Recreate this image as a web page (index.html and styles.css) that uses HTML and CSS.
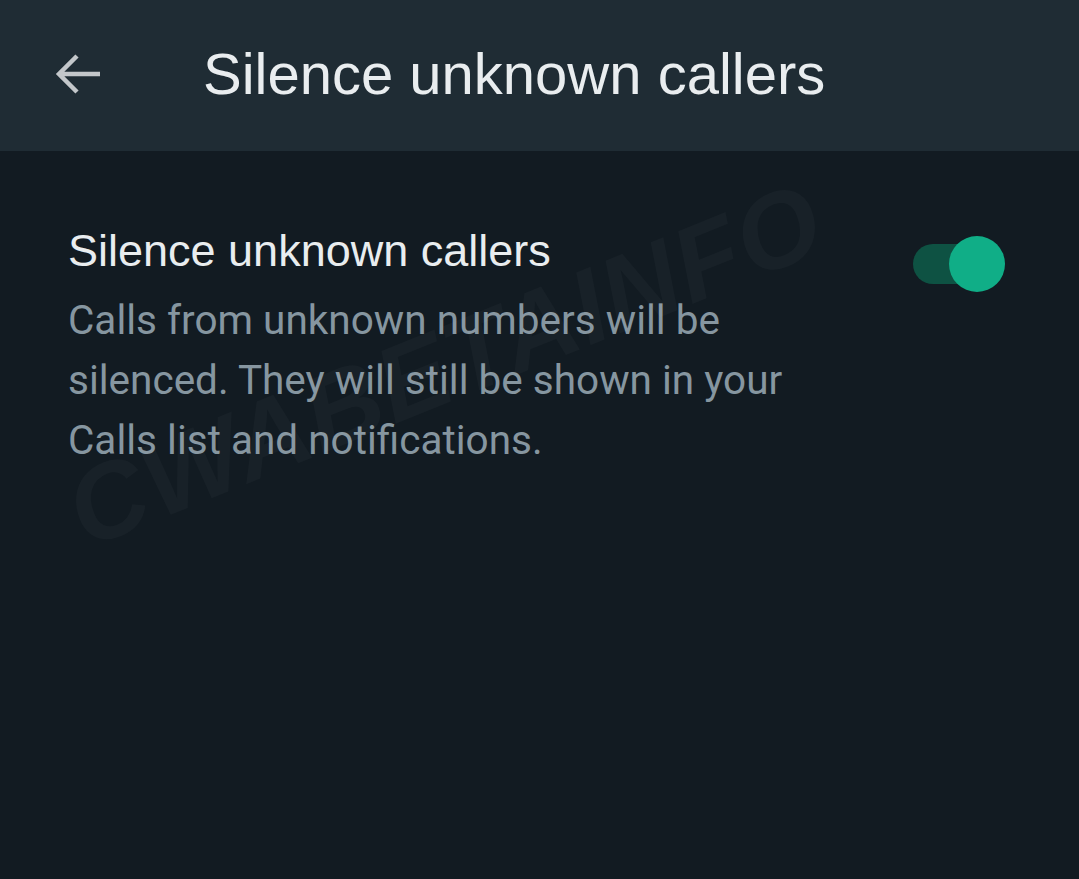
FILE: index.html
```html
<!DOCTYPE html>
<html lang="en">
<head>
    <meta charset="UTF-8">
    <meta name="viewport" content="width=device-width, initial-scale=1.0">
    <title>Silence unknown callers</title>
    <link rel="stylesheet" href="styles.css">
</head>
<body>
    <header class="app-bar">
        <button class="back-btn" aria-label="Back">
            <svg width="48" height="44" viewBox="0 0 48 44">
                <path d="M45 22H5M22 4L4 22l18 18" fill="none" stroke="#c3c7ca" stroke-width="4.5" stroke-linecap="butt" stroke-linejoin="miter"/>
            </svg>
        </button>
        <h1 class="app-title">Silence unknown callers</h1>
    </header>

    <main class="settings">
        <div class="setting-row">
            <div class="setting-text">
                <div class="setting-title">Silence unknown callers</div>
                <div class="setting-desc">Calls from unknown numbers will be silenced. They will still be shown in your Calls list and notifications.</div>
            </div>
            <div class="toggle on">
                <span class="toggle-track"></span>
                <span class="toggle-knob"></span>
            </div>
        </div>
        <div class="watermark">CWABETAINFO</div>
    </main>
</body>
</html>
```

FILE: styles.css
```css
* {
    margin: 0;
    padding: 0;
    box-sizing: border-box;
}

body {
    font-family: 'Liberation Sans', Arial, sans-serif;
    background-color: #121b22;
    width: 1079px;
    height: 879px;
    overflow: hidden;
}

.app-bar {
    height: 151px;
    background-color: #1f2c34;
    display: flex;
    align-items: center;
    padding-left: 55px;
    gap: 100px;
}

.back-btn {
    background: none;
    border: none;
    width: 48px;
    height: 44px;
    display: flex;
    margin-top: -4px;
}

.app-title {
    font-size: 58px;
    font-weight: 400;
    color: #e9edef;
    margin-top: -4px;
}

.settings {
    position: relative;
    height: 728px;
}

.setting-row {
    display: flex;
    justify-content: space-between;
    align-items: flex-start;
    padding: 74px 74px 0 68px;
}

.setting-text {
    width: 760px;
}

.setting-title {
    font-size: 45px;
    color: #e9edef;
    line-height: 52px;
}

.setting-desc {
    font-family: Roboto, 'Liberation Sans', sans-serif;
    font-size: 40.5px;
    color: #8696a0;
    line-height: 60px;
    margin-top: 13px;
}

.toggle {
    position: relative;
    width: 92px;
    height: 58px;
    margin-top: 10px;
}

.toggle-track {
    position: absolute;
    left: 0;
    top: 9px;
    width: 80px;
    height: 40px;
    border-radius: 20px;
    background-color: #0e5243;
}

.toggle-knob {
    position: absolute;
    right: 0;
    top: 1px;
    width: 56px;
    height: 56px;
    border-radius: 50%;
    background-color: #10ae87;
}

.watermark {
    position: absolute;
    left: 50px;
    top: 308px;
    font-size: 106px;
    line-height: 120px;
    font-weight: 700;
    font-style: italic;
    color: rgba(255, 255, 255, 0.028);
    transform: rotate(-22deg);
    transform-origin: left top;
    letter-spacing: 2px;
    white-space: nowrap;
    pointer-events: none;
}
```
